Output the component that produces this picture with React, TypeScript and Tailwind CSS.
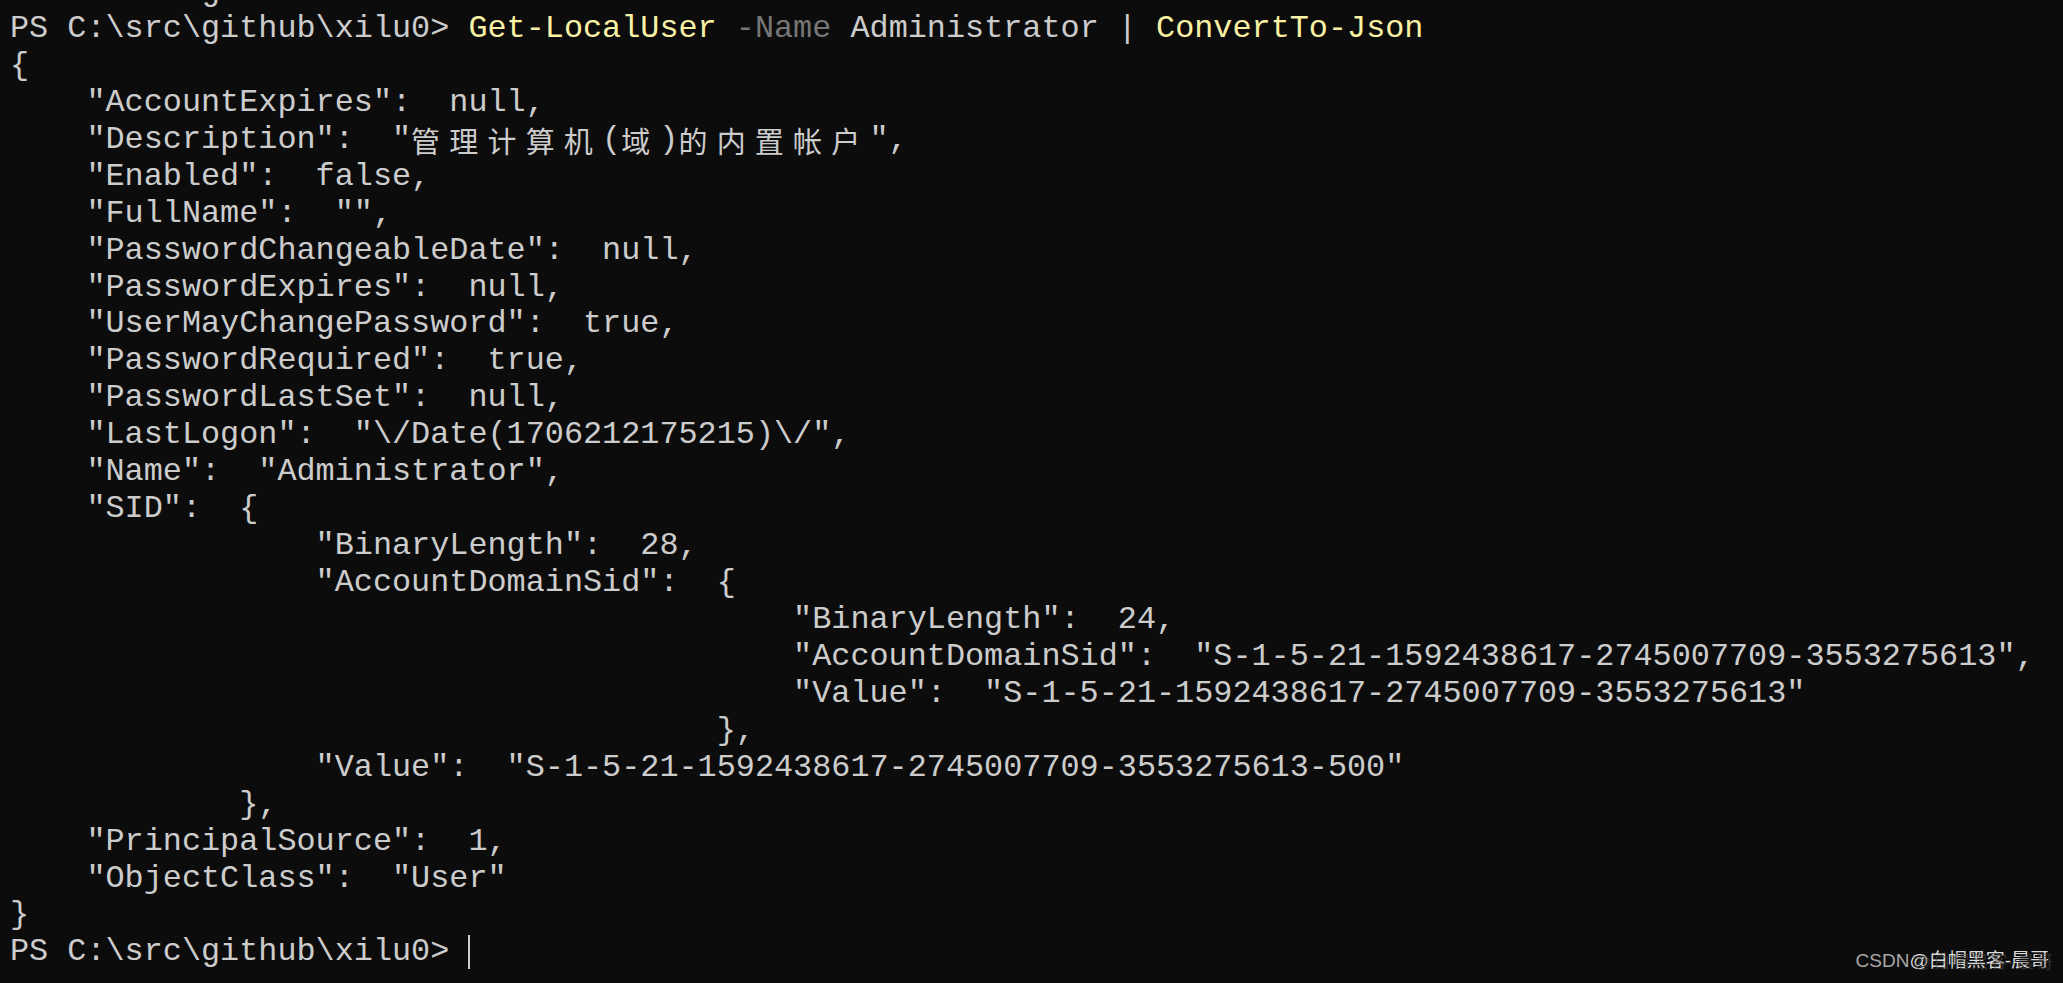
import React from 'react'

const mono = "font-['Liberation_Mono','DejaVu_Sans_Mono','Noto_Sans_CJK_SC',monospace]"

const prompt = 'PS C:\\src\\github\\xilu0> '

const json: string[] = [
  '{',
  '    "AccountExpires":  null,',
  '    "Description":  "管理计算机(域)的内置帐户",',
  '    "Enabled":  false,',
  '    "FullName":  "",',
  '    "PasswordChangeableDate":  null,',
  '    "PasswordExpires":  null,',
  '    "UserMayChangePassword":  true,',
  '    "PasswordRequired":  true,',
  '    "PasswordLastSet":  null,',
  '    "LastLogon":  "\\/Date(1706212175215)\\/",',
  '    "Name":  "Administrator",',
  '    "SID":  {',
  '                "BinaryLength":  28,',
  '                "AccountDomainSid":  {',
  '                                         "BinaryLength":  24,',
  '                                         "AccountDomainSid":  "S-1-5-21-1592438617-2745007709-3553275613",',
  '                                         "Value":  "S-1-5-21-1592438617-2745007709-3553275613"',
  '                                     },',
  '                "Value":  "S-1-5-21-1592438617-2745007709-3553275613-500"',
  '            },',
  '    "PrincipalSource":  1,',
  '    "ObjectClass":  "User"',
  '}',
]

// wide chars take two terminal cells
const isWide = (c: string) => /[\u3000-\u9fff\uff00-\uffef]/.test(c)

function Cells({ text }: { text: string }) {
  const parts: React.ReactNode[] = []
  let buf = ''
  Array.from(text).forEach((c, i) => {
    if (isWide(c)) {
      if (buf) parts.push(buf)
      buf = ''
      parts.push(
        <span
          key={i}
          className="inline-block w-[38.2px] text-left text-[29px] font-['Noto_Sans_CJK_SC',sans-serif] align-top"
        >
          {c}
        </span>
      )
    } else {
      buf += c
    }
  })
  if (buf) parts.push(buf)
  return <>{parts}</>
}

function Line({ children }: { children: React.ReactNode }) {
  return <div className="h-[36.95px] whitespace-pre">{children}</div>
}

export default function App() {
  return (
    <div className="relative h-[983px] w-full overflow-hidden bg-[#0c0c0c]">
      <div className={`${mono} -mt-[26px] pl-[10px] text-[31.83px] leading-[36.95px] text-[#cccccc]`}>
        <Line>{prompt}</Line>
        <Line>
          {prompt}
          <span className="text-[#f9f1a5]">Get-LocalUser</span>
          <span className="text-[#767676]"> -Name</span>
          {' Administrator | '}
          <span className="text-[#f9f1a5]">ConvertTo-Json</span>
        </Line>
        {json.map((l, i) => (
          <Line key={i}>
            <Cells text={l} />
          </Line>
        ))}
        <Line>
          {prompt}
          <span className="inline-block h-[34px] w-[2px] bg-[#cccccc] align-middle" />
        </Line>
      </div>

      <div className="absolute bottom-[8px] right-[14px] font-['Liberation_Sans','Noto_Sans_CJK_SC',sans-serif]">
        <div className="relative flex items-baseline whitespace-nowrap">
          <span className="text-[19px] text-[#a8a8a8]">CSDN</span>
          <span className="text-[19px] text-[#dcdcdc]">@白帽黑客-晨哥</span>
          <span className="pointer-events-none absolute right-[-6px] top-[3px] select-none text-[17px] tracking-[2px] text-[#4a4a4a] opacity-60">
            @白帽黑客-晨哥
          </span>
        </div>
      </div>
    </div>
  )
}
